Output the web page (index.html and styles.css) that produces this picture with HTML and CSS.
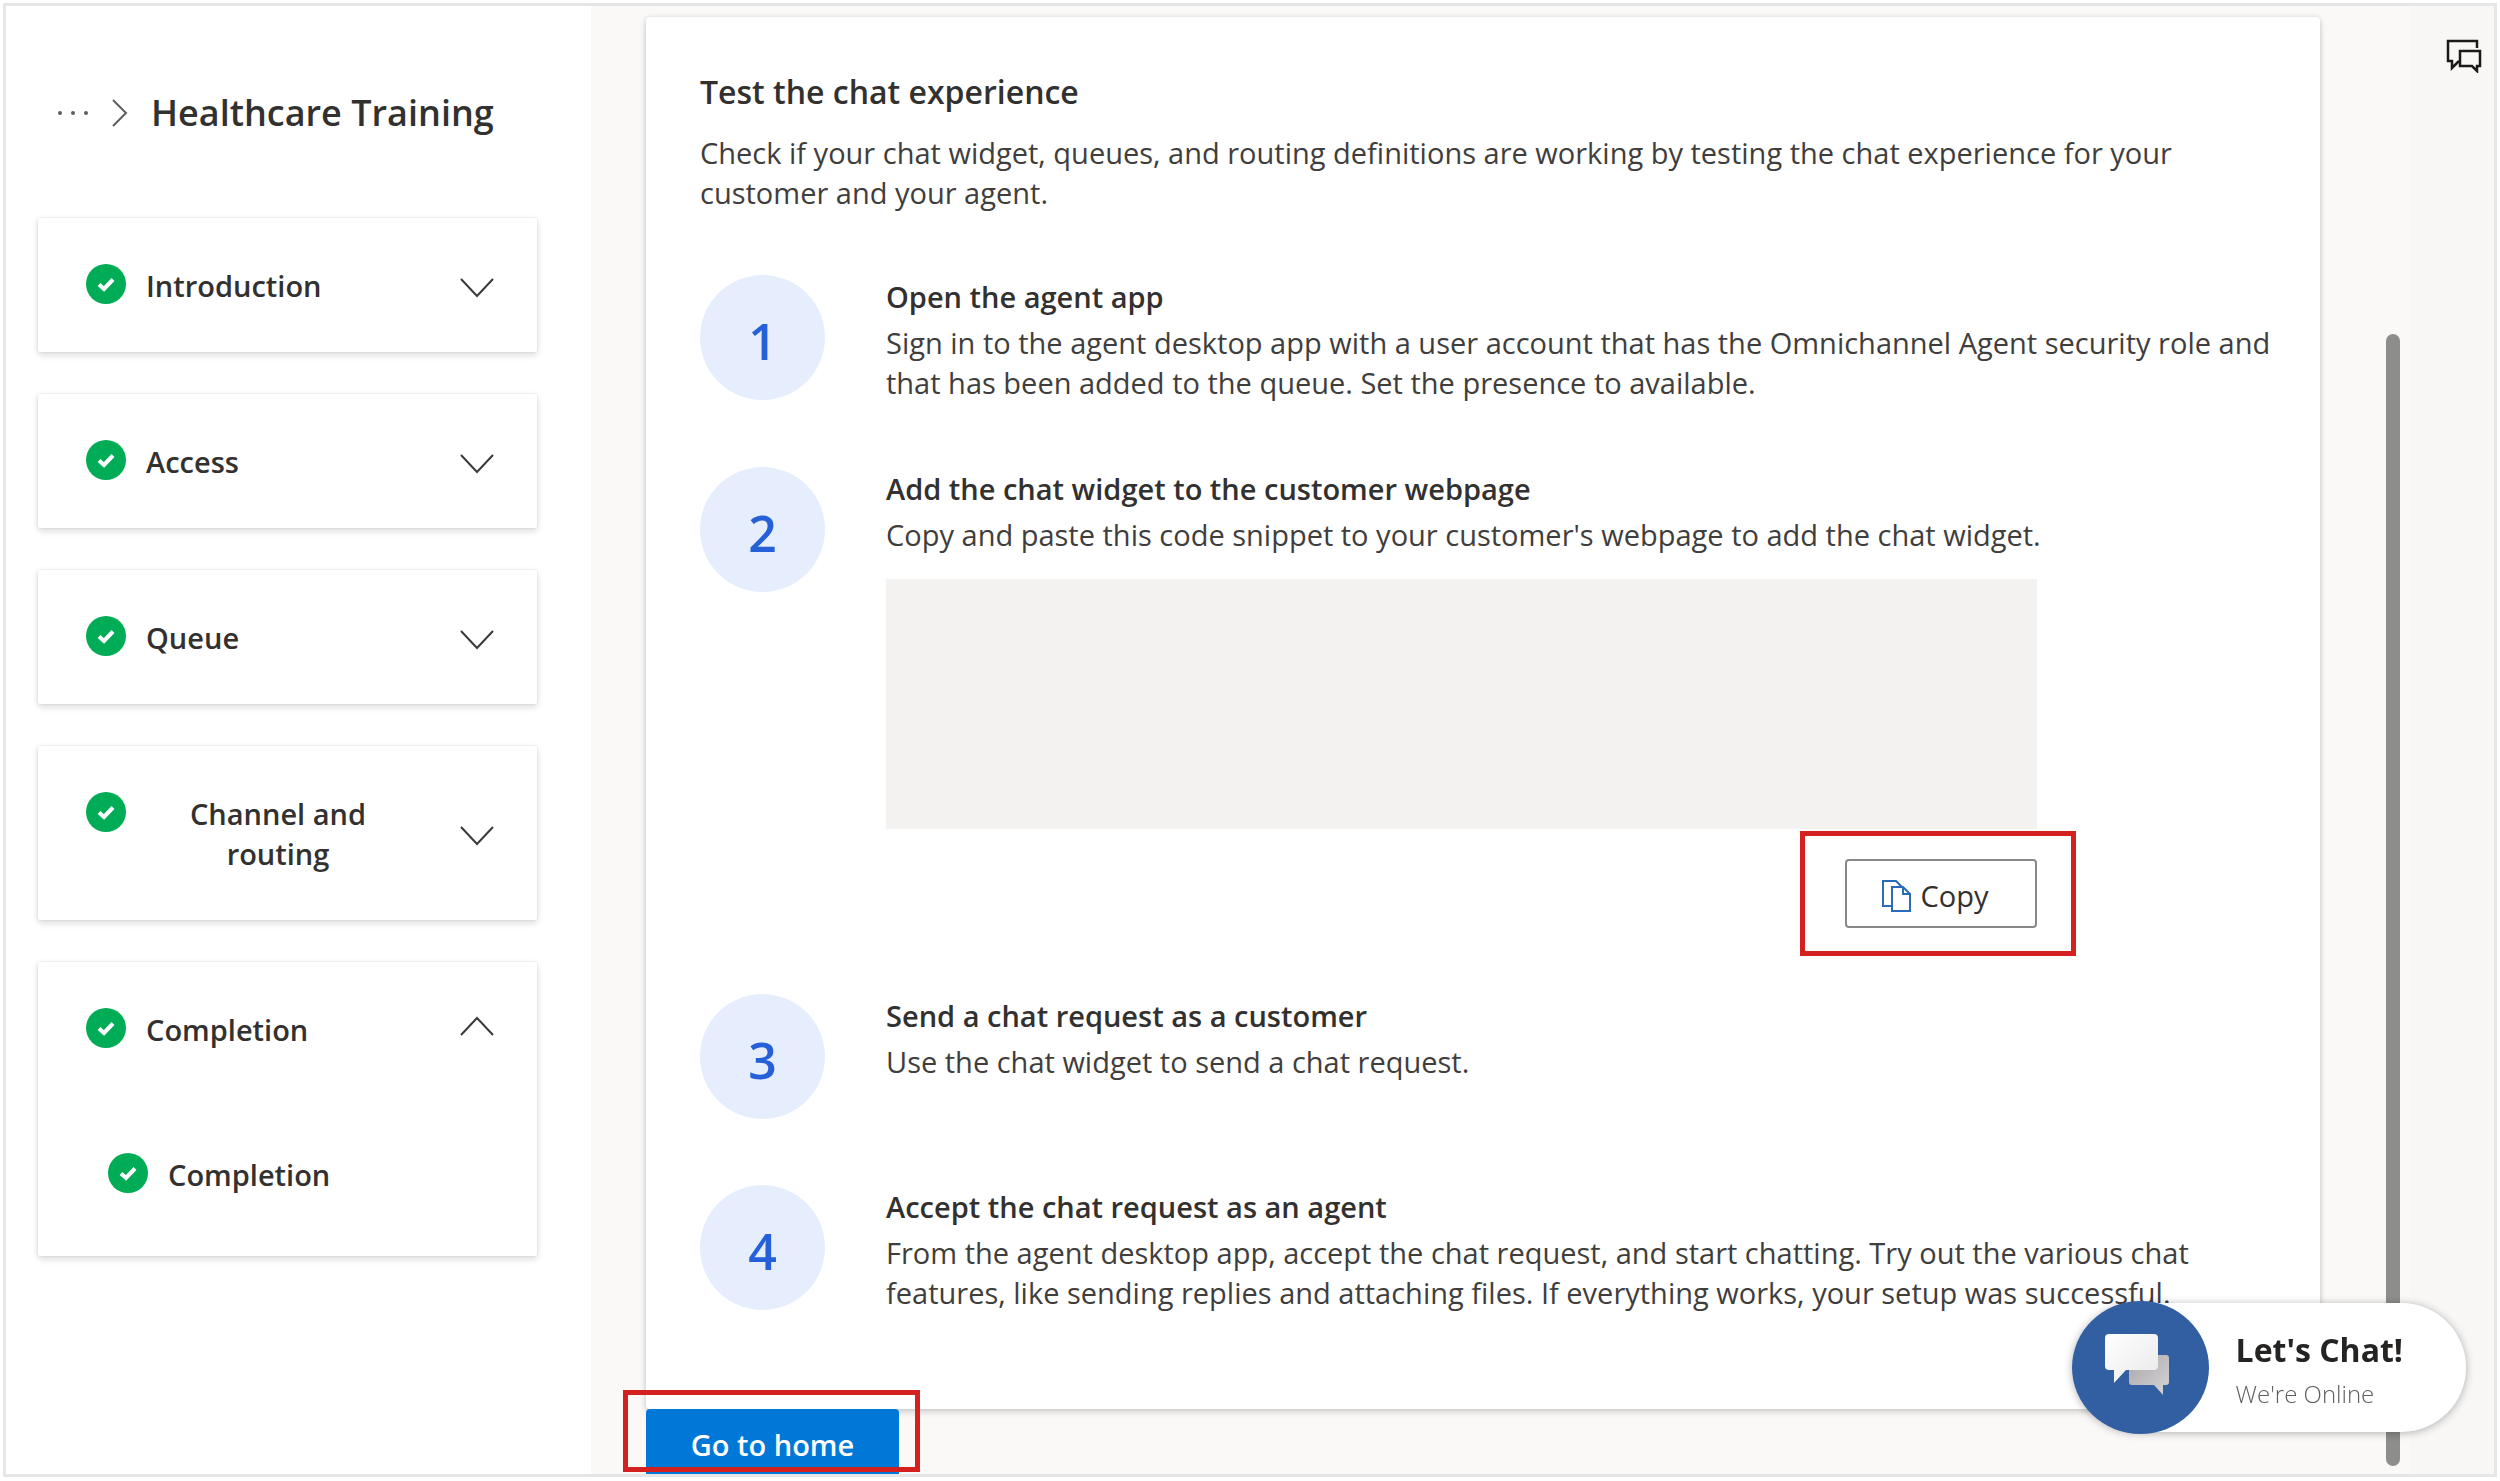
FILE: index.html
```html
<!DOCTYPE html>
<html lang="en">
<head>
<meta charset="utf-8">
<title>Healthcare Training</title>
<link rel="stylesheet" href="styles.css">
</head>
<body>
<svg class="sprite" aria-hidden="true">
  <symbol id="check" viewBox="0 0 40 40"><circle cx="20" cy="20" r="20" fill="#00ad56"/><path d="M13 20.500l5 4.500 9-9.500" fill="none" stroke="#fff" stroke-width="4"/></symbol>
  <symbol id="down" viewBox="0 0 34 26"><path d="M1 7l16 17L33 7" fill="none" stroke="#3b3a39" stroke-width="2"/></symbol>
  <symbol id="up" viewBox="0 0 34 26"><path d="M1 19L17 2l16 17" fill="none" stroke="#3b3a39" stroke-width="2"/></symbol>
</svg>
<div class="app">
  <nav class="sidebar" aria-label="Setup steps">
    <div class="crumbs">
      <button class="more" aria-label="More"><svg width="32" height="6" viewBox="0 0 32 6" fill="#605e5c"><circle cx="3" cy="3" r="2"/><circle cx="16" cy="3" r="2"/><circle cx="29" cy="3" r="2"/></svg></button>
      <svg width="16" height="28" viewBox="0 0 16 28"><path d="M1 1l13 13L1 27" fill="none" stroke="#605e5c" stroke-width="2"/></svg>
      <h1 class="crumb-title">Healthcare Training</h1>
    </div>
    <div class="groups">
      <section class="group"><button class="group-head"><svg class="check"><use href="#check"/></svg><span class="label">Introduction</span><svg class="chevron"><use href="#down"/></svg></button></section>
      <section class="group"><button class="group-head"><svg class="check"><use href="#check"/></svg><span class="label">Access</span><svg class="chevron"><use href="#down"/></svg></button></section>
      <section class="group"><button class="group-head"><svg class="check"><use href="#check"/></svg><span class="label">Queue</span><svg class="chevron"><use href="#down"/></svg></button></section>
      <section class="group"><button class="group-head"><svg class="check"><use href="#check"/></svg><span class="label">Channel and routing</span><svg class="chevron"><use href="#down"/></svg></button></section>
      <section class="group"><button class="group-head"><svg class="check"><use href="#check"/></svg><span class="label">Completion</span><svg class="chevron"><use href="#up"/></svg></button>
        <a class="sub" href="#completion"><svg class="check"><use href="#check"/></svg><span class="label">Completion</span></a></section>
    </div>
  </nav>
  <main class="pane" id="completion">
    <div class="content">
      <article class="card">
        <h2 class="heading">Test the chat experience</h2>
        <p class="text">Check if your chat widget, queues, and routing definitions are working by testing the chat experience for your customer and your agent.</p>
        <ol class="steps">
          <li class="step"><span class="num">1</span><div class="step-body"><h3 class="step-title">Open the agent app</h3><p class="text">Sign in to the agent desktop app with a user account that has the Omnichannel Agent security role and that has been added to the queue. Set the presence to available.</p></div></li>
          <li class="step"><span class="num">2</span><div class="step-body"><h3 class="step-title">Add the chat widget to the customer webpage</h3><p class="text">Copy and paste this code snippet to your customer's webpage to add the chat widget.</p>
            <div class="snippet"><div class="code"></div>
              <div class="marked copy-area"><button class="copy"><svg width="30" height="34" viewBox="0 0 30 34" fill="none" stroke="#2b6cb8" stroke-width="2"><path d="M9 27H1V2h13l6 6"/><path d="M10 8h11l7 7v17H10z"/><path d="M21 8v7h7"/></svg>Copy</button></div>
            </div></div></li>
          <li class="step"><span class="num">3</span><div class="step-body"><h3 class="step-title">Send a chat request as a customer</h3><p class="text">Use the chat widget to send a chat request.</p></div></li>
          <li class="step"><span class="num">4</span><div class="step-body"><h3 class="step-title">Accept the chat request as an agent</h3><p class="text">From the agent desktop app, accept the chat request, and start chatting. Try out the various chat features, like sending replies and attaching files. If everything works, your setup was successful.</p></div></li>
        </ol>
      </article>
      <div class="marked home-area"><button class="home">Go to home</button></div>
    </div>
    <div class="track"><div class="thumb"></div></div>
  </main>
  <aside class="rail">
    <button class="rail-button" aria-label="Chats"><svg width="36" height="34" viewBox="0 0 36 34" fill="none" stroke="#1b1a19" stroke-width="2.500"><path d="M31 9V2H2v20h4v7l7-7"/><path d="M14 12h20v15h-3v5l-5-5H14z"/></svg></button>
  </aside>
</div>
<button class="chat">
  <span class="chat-icon"><svg width="137" height="133" viewBox="0 0 137 133">
    <defs><linearGradient id="front" x2="1" y2="1"><stop stop-color="#fff"/><stop offset="1" stop-color="#e9e9ea"/></linearGradient><linearGradient id="back" x2="1" y2="1"><stop stop-color="#a9a7ab"/><stop offset="1" stop-color="#d6d4d6"/></linearGradient></defs>
    <path d="M60 54h34a3 3 0 0 1 3 3v24a3 3 0 0 1-3 3h-3v10L82 84H60a3 3 0 0 1-3-3V57a3 3 0 0 1 3-3z" fill="url(#back)"/>
    <path d="M37 33h45a4 4 0 0 1 4 4v28a4 4 0 0 1-4 4H54L42 82V69h-5a4 4 0 0 1-4-4V37a4 4 0 0 1 4-4z" fill="url(#front)"/></svg></span>
  <span class="chat-text"><span class="chat-title">Let's Chat!</span><span class="chat-status">We're Online</span></span>
</button>
</body>
</html>
```

FILE: styles.css
```css
* { box-sizing: border-box; }
body {
  margin: 0;
  padding: 3px 3px 4px;
  background: #fff;
  color: #323130;
  font: 400 29px/40px "Open Sans", "Noto Sans", sans-serif;
}
h1, h2, h3, p, ol { margin: 0; padding: 0; }
button { font: inherit; color: inherit; background: none; border: 0; padding: 0; cursor: pointer; }
svg { display: block; flex: none; }
.sprite { position: absolute; width: 0; height: 0; }

.app {
  display: flex;
  height: calc(100vh - 7px);
  border: 3px solid #e6e6e6;
  overflow: hidden;
}

/* Sidebar */
.sidebar { flex: none; width: 585px; padding: 83px 54px 0 32px; background: #fff; }
.crumbs { display: flex; align-items: center; gap: 23px; height: 48px; margin-bottom: 81px; padding-left: 19px; }
.crumb-title { font-size: 36px; line-height: 48px; font-weight: 600; white-space: nowrap; }
.groups { display: flex; flex-direction: column; gap: 42px; }
.group { border-radius: 2px; background: #fff; box-shadow: 0 3px 7px rgba(0, 0, 0, .14), 0 0 3px rgba(0, 0, 0, .1); }
.group-head { display: flex; align-items: flex-start; width: 100%; padding: 46px 43px 46px 48px; font-weight: 600; }
.check { width: 40px; height: 40px; }
.label { max-width: 264px; margin-left: 20px; padding-top: 2px; font-weight: 600; }
.chevron { width: 34px; height: 26px; margin-left: auto; align-self: center; }
.sub { display: flex; padding: 57px 43px 61px 70px; color: inherit; text-decoration: none; }

/* Main pane */
.pane { flex: 1; min-width: 0; display: flex; background: #faf9f8; }
.content { flex: 1; min-width: 0; padding: 11px 66px 0 55px; overflow: hidden; }
.card { padding: 55px 46px 96px 54px; border-radius: 4px; background: #fff; box-shadow: 0 3px 7px rgba(0, 0, 0, .16), 0 0 4px rgba(0, 0, 0, .1); }
.heading { margin-bottom: 21px; font-size: 32px; line-height: 40px; font-weight: 600; }
.text { color: #403e3d; }
.steps { display: flex; flex-direction: column; gap: 64px; margin-top: 62px; list-style: none; }
.step { display: flex; align-items: flex-start; gap: 61px; min-height: 127px; }
.num {
  flex: none;
  width: 125px;
  height: 125px;
  border-radius: 50%;
  background: #e6eefd;
  color: #2560d8;
  font-size: 50px;
  line-height: 132px;
  font-weight: 600;
  text-align: center;
}
.step-body { flex: 1; min-width: 0; padding-top: 2px; }
.step-title { margin-bottom: 6px; font-size: 29px; line-height: 40px; font-weight: 600; }
.snippet { display: flex; flex-direction: column; align-items: flex-end; gap: 30px; width: 1151px; max-width: 100%; padding: 24px 0 2px; }
.code { width: 100%; height: 250px; background: #f3f2f1; }
.copy { display: flex; align-items: center; justify-content: center; gap: 9px; width: 192px; height: 69px; padding: 4px 12px 0 0; border: 2px solid #8a8886; border-radius: 4px; }
.home-area { width: fit-content; }
.home { width: 253px; height: 72px; border-radius: 4px; background: #0078d7; color: #fff; font-weight: 600; }

.marked { position: relative; }
.marked::after { content: ""; position: absolute; border: 5px solid #d4201f; pointer-events: none; }
.copy-area::after { inset: -28px -39px -28px -45px; }
.home-area::after { inset: -19px -21px 9px -23px; }

.track { flex: none; display: flex; width: 24px; padding: 328px 10px 8px 0; }
.thumb { flex: 1; border-radius: 7px; background: #8d8d8c; }

.rail { flex: none; width: 84px; padding: 33px 12px 0 36px; background: #f8f7f6; }

/* Chat launcher */
.chat {
  position: fixed;
  right: 34px;
  bottom: 49px;
  display: flex;
  align-items: center;
  gap: 27px;
  height: 129px;
  padding-right: 63px;
  border-radius: 65px;
  background: #fff;
  box-shadow: 0 1px 8px rgba(0, 0, 0, .3);
  text-align: left;
}
.chat-icon { border-radius: 50%; background: #315fa2; }
.chat-text { display: flex; flex-direction: column; padding-top: 4px; }
.chat-title { color: #252423; font-size: 32px; line-height: 48px; font-weight: 700; }
.chat-status { color: #605e5c; font-size: 24px; line-height: 40px; font-weight: 300; }
```
